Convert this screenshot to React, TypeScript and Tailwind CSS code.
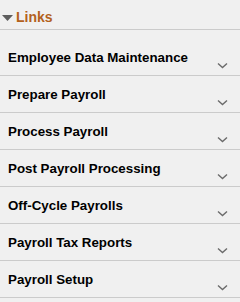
const ITEMS = [
  'Employee Data Maintenance',
  'Prepare Payroll',
  'Process Payroll',
  'Post Payroll Processing',
  'Off-Cycle Payrolls',
  'Payroll Tax Reports',
  'Payroll Setup',
];

function Chevron() {
  return (
    <svg width="11" height="7" viewBox="0 0 11 7" className="shrink-0">
      <path d="M1 1.5 L5.5 5.5 L10 1.5" fill="none" stroke="#6b6b6b" strokeWidth="1.4" />
    </svg>
  );
}

export default function App() {
  return (
    <div className="w-[240px] h-[302px] bg-[#f0f0f0] overflow-hidden font-['Liberation_Sans',Arial,sans-serif]">
      {/* Header */}
      <div className="h-[30px] border-b border-[#cbcbcb] flex items-start pt-[9px] pl-[2px]">
        <svg width="11" height="6" viewBox="0 0 11 6" className="mt-[6px] mr-[3px]">
          <path d="M0 0 H11 L5.5 6 Z" fill="#5e5e5e" />
        </svg>
        <span className="text-[14px] leading-[16px] font-bold text-[#b3611c]">Links</span>
      </div>

      {/* Rows */}
      <div className="pt-[9px]">
        {ITEMS.map((label) => (
          <div
            key={label}
            className="h-[37px] border-b border-[#cbcbcb] flex items-start justify-between pl-[8px] pr-[12px]"
          >
            <span className="pt-[11px] text-[13.33px] leading-[15px] font-bold text-black">{label}</span>
            <div className="mt-[23px]">
              <Chevron />
            </div>
          </div>
        ))}
      </div>
    </div>
  );
}
